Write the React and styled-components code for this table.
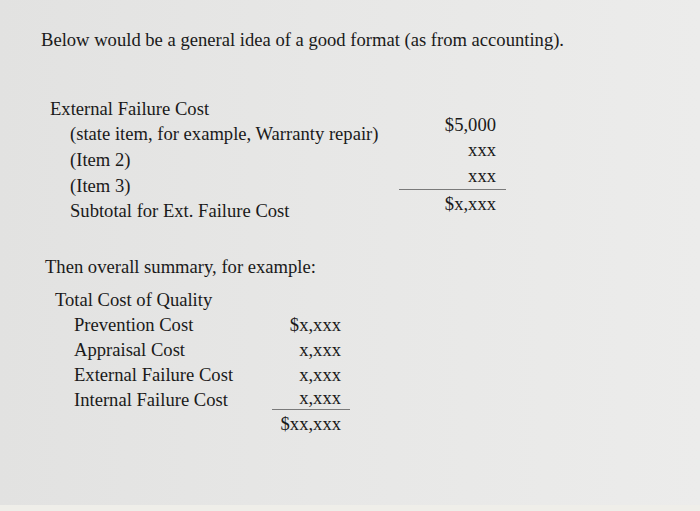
import React from "react";
import styled, { createGlobalStyle } from "styled-components";

const Global = createGlobalStyle`
  html, body { margin: 0; padding: 0; }
  body {
    width: 700px;
    height: 511px;
    overflow: hidden;
    background: #e6e6e5;
    font-family: "Liberation Serif", "Times New Roman", serif;
    color: #1a1a1a;
  }
`;

const Page = styled.div`
  width: 700px;
  height: 511px;
  display: flex;
  flex-direction: column;
  background: linear-gradient(90deg, #e2e2e1 0%, #e7e7e6 45%, #ececeb 100%);
`;

const Sheet = styled.div`
  flex: 1;
  padding: 28px 0 0 41px;
  display: flex;
  flex-direction: column;
`;

const Bottom = styled.div`
  height: 6px;
  background: #efeee9;
`;

const Title = styled.div`
  font-size: 18.6px;
  line-height: 24px;
`;

const Text = styled.div`
  font-size: 18.6px;
  line-height: ${(p) => p.$lh || 25}px;
  padding-left: ${(p) => p.$indent || 0}px;
  white-space: nowrap;
`;

const Block = styled.div`
  display: flex;
  align-items: flex-start;
  margin-left: ${(p) => p.$left}px;
  margin-top: ${(p) => p.$top}px;
`;

const Labels = styled.div`
  width: ${(p) => p.$w}px;
  display: flex;
  flex-direction: column;
`;

const Amounts = styled.div`
  width: ${(p) => p.$w}px;
  margin-top: ${(p) => p.$top || 0}px;
  display: flex;
  flex-direction: column;
`;

const Amount = styled.div`
  font-size: 18.6px;
  line-height: ${(p) => p.$lh || 25}px;
  text-align: right;
  padding-right: ${(p) => p.$pr}px;
  ${(p) => (p.$rule ? "border-bottom: 1.5px solid #7a7a7a;" : "")}
`;

const Note = styled.div`
  font-size: 18.6px;
  line-height: 25px;
  margin-left: 4px;
  margin-top: ${(p) => p.$top}px;
`;

export default function App() {
  return (
    <Page>
      <Global />
      <Sheet>
        <Title>Below would be a general idea of a good format (as from accounting).</Title>
        <Block $left={9} $top={44}>
          <Labels $w={349}>
            <Text $lh={25}>External Failure Cost</Text>
            <Text $indent={20} $lh={26}>(state item, for example, Warranty repair)</Text>
            <Text $indent={20} $lh={26}>(Item 2)</Text>
            <Text $indent={20} $lh={25}>(Item 3)</Text>
            <Text $indent={20} $lh={25}>Subtotal for Ext. Failure Cost</Text>
          </Labels>
          <Amounts $w={107} $top={15}>
            <Amount $pr={10} $lh={27}>$5,000</Amount>
            <Amount $pr={10} $lh={24}>xxx</Amount>
            <Amount $pr={10} $lh={27} $rule>xxx</Amount>
            <Amount $pr={10} $lh={27}>$x,xxx</Amount>
          </Amounts>
        </Block>
        <Note $top={31}>Then overall summary, for example:</Note>
        <Block $left={14} $top={8}>
          <Labels $w={217}>
            <Text $lh={25}>Total Cost of Quality</Text>
            <Text $indent={19}>Prevention Cost</Text>
            <Text $indent={19}>Appraisal Cost</Text>
            <Text $indent={19}>External Failure Cost</Text>
            <Text $indent={19}>Internal Failure Cost</Text>
          </Labels>
          <Amounts $w={78} $top={25}>
            <Amount $pr={9}>$x,xxx</Amount>
            <Amount $pr={9}>x,xxx</Amount>
            <Amount $pr={9}>x,xxx</Amount>
            <Amount $pr={9} $lh={22} $rule>x,xxx</Amount>
            <Amount $pr={9} $lh={28}>$xx,xxx</Amount>
          </Amounts>
        </Block>
      </Sheet>
      <Bottom />
    </Page>
  );
}
